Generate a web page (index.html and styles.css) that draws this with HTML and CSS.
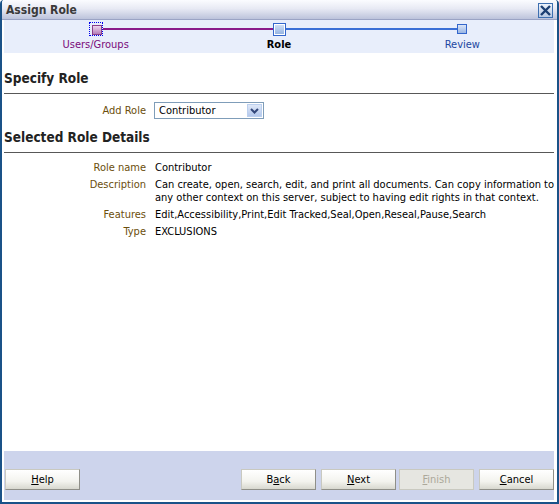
FILE: index.html
```html
<!DOCTYPE html>
<html lang="en">
<head>
  <meta charset="UTF-8" />
  <title>Assign Role</title>
  <link rel="stylesheet" href="styles.css">
</head>
<body>
  <div class="dialog">
    <div class="titlebar">
      <span class="title">Assign Role</span>
      <span class="close">
        <svg width="11" height="11" viewBox="0 0 11 11">
          <path d="M1 1 L10 10 M10 1 L1 10" stroke="#1c3f73" stroke-width="2.4"/>
        </svg>
      </span>
    </div>

    <div class="content">
      <div class="train">
        <div class="step visited">
          <div class="track"><span class="half"></span><span class="stop"></span><span class="half purple"></span></div>
          <div class="label">Users/Groups</div>
        </div>
        <div class="step current">
          <div class="track"><span class="half purple"></span><span class="stop"></span><span class="half blue"></span></div>
          <div class="label">Role</div>
        </div>
        <div class="step next">
          <div class="track"><span class="half blue"></span><span class="stop"></span><span class="half"></span></div>
          <div class="label">Review</div>
        </div>
      </div>

      <h2 class="section">Specify Role</h2>
      <div class="form">
        <div class="row add-row">
          <span class="lbl">Add Role</span>
          <span class="select">
            <span class="select-text">Contributor</span>
            <span class="arrow">
              <svg width="9" height="6" viewBox="0 0 9 6"><path d="M1 1 L4.5 4.5 L8 1" fill="none" stroke="#33477a" stroke-width="2"/></svg>
            </span>
          </span>
        </div>
      </div>

      <h2 class="section second">Selected Role Details</h2>
      <div class="form details">
        <div class="row"><span class="lbl">Role name</span><span class="val">Contributor</span></div>
        <div class="row"><span class="lbl">Description</span><span class="val">Can create, open, search, edit, and print all documents. Can copy information to any other context on this server, subject to having edit rights in that context.</span></div>
        <div class="row"><span class="lbl">Features</span><span class="val">Edit,Accessibility,Print,Edit Tracked,Seal,Open,Reseal,Pause,Search</span></div>
        <div class="row"><span class="lbl">Type</span><span class="val">EXCLUSIONS</span></div>
      </div>

      <div class="spacer"></div>

      <div class="footer">
        <button class="btn"><u>H</u>elp</button>
        <div class="btn-group">
          <button class="btn">B<u>a</u>ck</button>
          <button class="btn"><u>N</u>ext</button>
          <button class="btn disabled"><u>F</u>inish</button>
          <button class="btn"><u>C</u>ancel</button>
        </div>
      </div>
    </div>
  </div>
</body>
</html>
```

FILE: styles.css
```css
* {
  margin: 0;
  padding: 0;
  box-sizing: border-box;
}

body, html {
  width: 559px;
  height: 504px;
  overflow: hidden;
  background: #fff;
  font-family: 'DejaVu Sans Condensed', 'DejaVu Sans', sans-serif;
  font-size: 11px;
  color: #000;
}

.dialog {
  width: 559px;
  height: 504px;
  display: flex;
  flex-direction: column;
  border: 2px solid #1a5288;
  border-top: none;
  border-radius: 4px 4px 0 0;
  background: #fff;
  overflow: hidden;
}

.titlebar {
  height: 20px;
  display: flex;
  align-items: center;
  justify-content: space-between;
  padding: 0 4px 0 4px;
  background: linear-gradient(#fbfcff, #e8eaf4 45%, #bcc3db);
  border-bottom: 1px solid #9aa3c4;
}

.title {
  font-weight: bold;
  font-size: 12px;
  color: #3a3a3a;
}

.close {
  width: 15px;
  height: 15px;
  border: 1px solid #3e6fb0;
  background: linear-gradient(#eef3fb, #b8c9e4);
  display: flex;
  align-items: center;
  justify-content: center;
  margin-top: 2px;
}

.content {
  flex: 1;
  display: flex;
  flex-direction: column;
  padding: 0 3px 2px 2px;
}

.train {
  display: grid;
  grid-template-columns: 1fr 1fr 1fr;
  background: #e8eefb;
  height: 33px;
  padding-top: 3px;
}

.track {
  display: flex;
  align-items: center;
  height: 12px;
}

.half {
  flex: 1;
  height: 2px;
}

.half.purple {
  background: #8a1a8a;
}

.half.blue {
  background: #3a6fd6;
}

.stop {
  display: block;
}

.visited .stop {
  width: 14px;
  height: 14px;
  border: 1px dotted #0000ee;
  padding: 2px;
  position: relative;
}

.visited .stop::after {
  content: "";
  display: block;
  width: 8px;
  height: 8px;
  border: 1px solid #8a3f8a;
  background: linear-gradient(#eed6ee, #b57eb8);
}

.current .stop {
  width: 13px;
  height: 13px;
  border: 1px solid #3366cc;
  background: linear-gradient(#d6e3f7, #8fb0e0);
  box-shadow: inset 0 0 0 1px #fff;
}

.next .stop {
  width: 10px;
  height: 10px;
  border: 1px solid #3366cc;
  background: linear-gradient(#d9e4f7, #9ab6e3);
}

.label {
  text-align: center;
  margin-top: 3px;
  font-size: 11px;
}

.visited .label {
  color: #7a0a7a;
}

.current .label {
  font-weight: bold;
  color: #000;
}

.next .label {
  color: #1c47a0;
}

.section {
  font-size: 13.5px;
  font-weight: bold;
  color: #222;
  padding: 16px 0 6px 0;
  border-bottom: 1px solid #585858;
  line-height: 18px;
}

.section.second {
  padding-top: 8px;
}

.form {
  padding: 8px 0 0 0;
}

.row {
  display: grid;
  grid-template-columns: 142px 1fr;
  column-gap: 9px;
  line-height: 13px;
  margin-bottom: 4px;
}

.lbl {
  text-align: right;
  color: #6b4e0c;
}

.add-row {
  align-items: center;
  margin-bottom: 1px;
}

.select {
  width: 110px;
  height: 17px;
  margin-left: -1px;
  border: 1px solid #7f9db9;
  display: flex;
  align-items: center;
  justify-content: space-between;
  padding-left: 4px;
}

.arrow {
  width: 15px;
  height: 13px;
  margin-right: 1px;
  background: linear-gradient(#dfe8f8, #b4c8ec);
  border: 1px solid #bcd0ef;
  display: flex;
  align-items: center;
  justify-content: center;
}

.details {
  padding-top: 8px;
}

.val {
  margin-right: -12px;
}

.spacer {
  flex: 1;
}

.footer {
  height: 49px;
  background: #cdd4ec;
  display: flex;
  align-items: flex-end;
  justify-content: space-between;
  padding: 0 0 10px 1px;
}

.btn-group {
  display: flex;
  gap: 5px;
}

.btn {
  width: 75px;
  height: 21px;
  font-family: 'DejaVu Sans Condensed', 'DejaVu Sans', sans-serif;
  font-size: 11px;
  color: #000;
  background: linear-gradient(#ffffff, #f3f3ee 60%, #d8d8cf);
  border: 1px solid #c9c9c0;
  border-right-color: #8f8f88;
  border-bottom-color: #8f8f88;
}

.btn.disabled {
  margin-left: -2px;
  background: #e6e6e1;
  color: #aca899;
  border-color: #c9c9c0;
}
```
